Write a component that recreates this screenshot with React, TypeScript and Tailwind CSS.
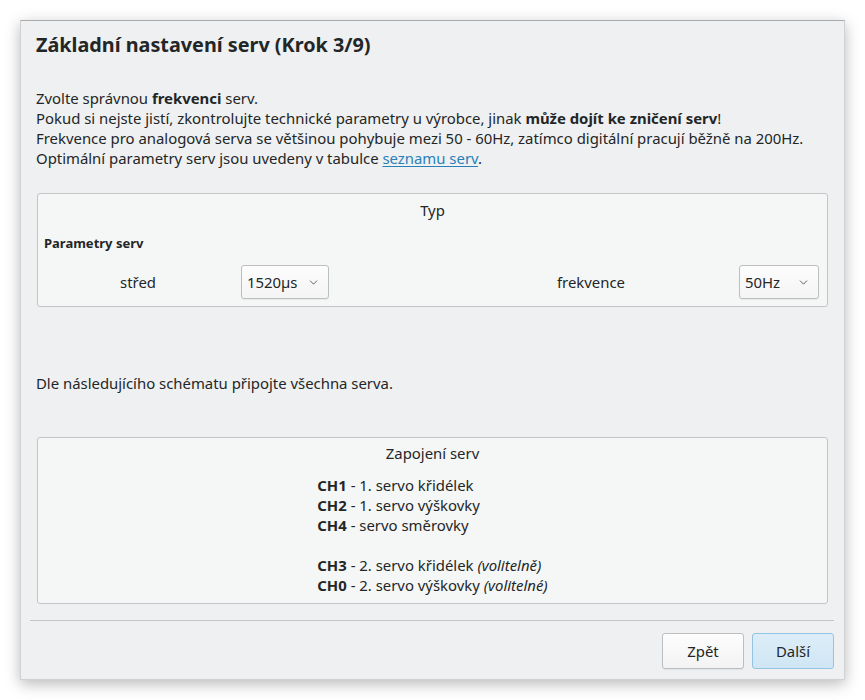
import { ChevronDown } from 'lucide-react';

const font = { fontFamily: '"Noto Sans", "Open Sans", sans-serif' };

function Select({ value, width }: { value: string; width: string }) {
  return (
    <div
      className={`${width} h-[34px] flex items-center justify-between pl-[5px] pr-[8px] rounded-[3px] border border-[#bcbebf] bg-gradient-to-b from-[#fdfdfd] to-[#f4f4f4] shadow-[0_1px_1px_rgba(0,0,0,0.06)]`}
    >
      <span>{value}</span>
      <ChevronDown size={13} strokeWidth={1.5} className="text-[#3a3e41]" />
    </div>
  );
}

export default function App() {
  return (
    <div className="min-h-[700px] bg-white p-[20px] text-[14.9px] leading-[20px] text-[#232627]" style={font}>
      <div className="w-[825px] h-[660px] bg-[#eff0f1] border border-[#d0d1d2] border-t-[#a9abad] shadow-[0_4px_14px_rgba(0,0,0,0.28)] flex flex-col">
        <div className="px-[15px] pt-[11px] flex-1">
          <h1 className="text-[19.8px] leading-[26px] font-bold">Základní nastavení serv (Krok 3/9)</h1>

          <div className="mt-[30px]">
            <p>
              Zvolte správnou <b>frekvenci</b> serv.
            </p>
            <p>
              Pokud si nejste jistí, zkontrolujte technické parametry u výrobce, jinak <b>může dojít ke zničení serv</b>!
            </p>
            <p>Frekvence pro analogová serva se většinou pohybuje mezi 50 - 60Hz, zatímco digitální pracují běžně na 200Hz.</p>
            <p>
              Optimální parametry serv jsou uvedeny v tabulce{' '}
              <a className="text-[#2980b9] underline underline-offset-2">seznamu serv</a>.
            </p>
          </div>

          {/* Typ / parametry */}
          <div className="mt-[25px] mx-px h-[114px] rounded-[3px] border border-[#c2c4c5] bg-[#f5f6f6] px-[6px]">
            <div className="pt-[6px] text-center">Typ</div>
            <div className="mt-[15px] text-[13px] leading-[16px] font-bold">Parametry serv</div>
            <div className="mt-[14px] flex items-center">
              <div className="w-[188px] text-center">střed</div>
              <div className="w-[9px]" />
              <Select value="1520µs" width="w-[88px]" />
              <div className="w-[400px] pl-[124px] text-center">frekvence</div>
              <div className="w-[10px]" />
              <Select value="50Hz" width="w-[80px]" />
            </div>
          </div>

          <p className="mt-[66px]">Dle následujícího schématu připojte všechna serva.</p>

          {/* Zapojení serv */}
          <div className="mt-[44px] mx-px h-[167px] rounded-[3px] border border-[#c2c4c5] bg-[#f5f6f6] text-center">
            <div className="pt-[5px]">Zapojení serv</div>
            <div className="mt-[12px] inline-block text-left">
              <p>
                <b>CH1</b> - 1. servo křidélek
              </p>
              <p>
                <b>CH2</b> - 1. servo výškovky
              </p>
              <p>
                <b>CH4</b> - servo směrovky
              </p>
              <p>&nbsp;</p>
              <p>
                <b>CH3</b> - 2. servo křidélek <i>(volitelně)</i>
              </p>
              <p>
                <b>CH0</b> - 2. servo výškovky <i>(volitelné)</i>
              </p>
            </div>
          </div>
        </div>

        <div className="mx-[9px] mr-[10px] h-px bg-[#c3c5c7]" />
        <div className="flex justify-end gap-[8px] pt-[12px] pb-[10px] pr-[10px]">
          <button className="w-[82px] h-[36px] rounded-[3px] border border-[#bcbebf] bg-gradient-to-b from-[#fdfdfd] to-[#f3f3f3] shadow-[0_1px_1px_rgba(0,0,0,0.06)]">
            Zpět
          </button>
          <button className="w-[82px] h-[36px] rounded-[3px] border border-[#93c5e3] bg-gradient-to-b from-[#dcedf8] to-[#d0e6f4]">
            Další
          </button>
        </div>
      </div>
    </div>
  );
}
